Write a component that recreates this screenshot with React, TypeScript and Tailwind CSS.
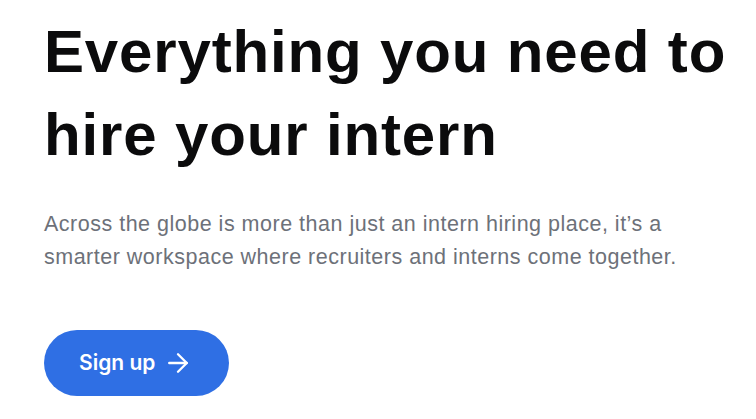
import React from "react";

export default function App() {
  return (
    <div className="w-[756px] h-[419px] bg-white overflow-hidden pl-[44px] pt-[10px]">
      <h1 className="font-['Liberation_Sans',Arial,sans-serif] font-bold text-[60px] leading-[83px] text-[#0b0b0c] tracking-[0.85px] whitespace-nowrap">
        Everything you need to
        <br />
        hire your intern
      </h1>
      <p className="mt-[32px] font-['Liberation_Sans',Arial,sans-serif] text-[21.5px] leading-[33px] text-[#6d7179] tracking-[0.5px] whitespace-nowrap">
        Across the globe is more than just an intern hiring place, it’s a
        <br />
        smarter workspace where recruiters and interns come together.
      </p>
      <button className="mt-[56px] flex items-center gap-[8px] h-[66px] w-[185px] pl-[35px] rounded-full bg-[#2f6fe4] text-white font-['Inter',sans-serif] font-semibold text-[21px]">
        <span>Sign up</span>
        <svg width="30" height="30" viewBox="0 0 24 24" fill="none" stroke="currentColor" strokeWidth="1.9" strokeLinecap="round" strokeLinejoin="round">
          <path d="M5 12h14" />
          <path d="m12 5 7 7-7 7" />
        </svg>
      </button>
    </div>
  );
}
